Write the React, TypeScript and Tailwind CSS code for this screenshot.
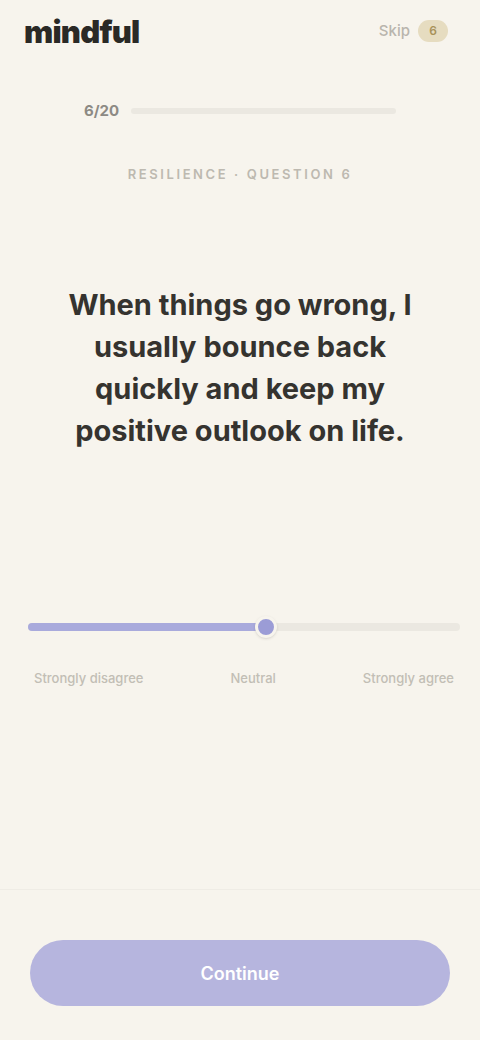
import React from "react";

export default function App() {
  const value = 55;
  return (
    <div
      className="w-[480px] h-[1040px] bg-[#f7f4ed] flex flex-col"
      style={{ fontFamily: "Inter, 'Liberation Sans', sans-serif" }}
    >
      {/* header */}
      <div className="flex items-center justify-between px-[24px] pt-[2px] h-[60px]">
        <div className="text-[31px] leading-none font-black tracking-tight text-[#2a2926]">mindful</div>
        <div className="flex items-center gap-2 pr-[8px]">
          <span className="text-[15px] font-medium text-[#b9b5ad]">Skip</span>
          <span className="w-[30px] h-[22px] rounded-full bg-[#e6dcc0] flex items-center justify-center text-[12px] font-semibold text-[#a8925a]">
            6
          </span>
        </div>
      </div>

      {/* progress */}
      <div className="flex items-center gap-3 px-[84px] mt-[40px]">
        <span className="text-[15px] font-bold text-[#8d8a84]">6/20</span>
        <div className="flex-1 h-[6px] rounded-full bg-[#ebe8e1]" />
      </div>

      {/* category */}
      <div className="mt-[42px] text-center text-[13px] font-semibold uppercase tracking-[0.2em] text-[#bdb9b0]">
        Resilience · Question 6
      </div>

      {/* question */}
      <div className="mt-[100px] px-[40px] text-center text-[29px] leading-[42px] font-bold text-[#35332f]">
        When things go wrong, I<br />
        usually bounce back<br />
        quickly and keep my<br />
        positive outlook on life.
      </div>

      {/* slider */}
      <div className="mt-[165px] pl-[28px] pr-[20px]">
        <div className="relative h-[20px] flex items-center">
          <div className="w-full h-[8px] rounded-full bg-[#ebe8e1]" />
          <div
            className="absolute left-0 h-[8px] rounded-full bg-[#a9aadc]"
            style={{ width: `${value}%` }}
          />
          <div
            className="absolute w-[22px] h-[22px] -ml-[11px] rounded-full bg-[#9b9cd6] border-[3px] border-[#f7f4ed] shadow"
            style={{ left: `${value}%` }}
          />
        </div>
        <div className="mt-[32px] flex justify-between px-[6px] text-[13px] font-medium text-[#c2beb5]">
          <span>Strongly disagree</span>
          <span>Neutral</span>
          <span>Strongly agree</span>
        </div>
      </div>

      <div className="flex-1" />

      {/* bottom */}
      <div className="border-t border-[#efece5] px-[30px] pt-[50px] pb-[34px]">
        <button className="w-full h-[66px] rounded-full bg-[#b6b5de] text-white text-[18px] font-semibold">
          Continue
        </button>
      </div>
    </div>
  );
}
